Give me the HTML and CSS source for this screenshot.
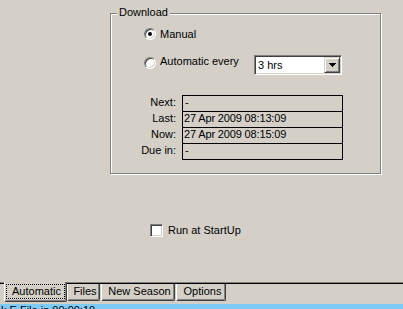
FILE: index.html
```html
<!DOCTYPE html>
<html lang="en">
  <head>
    <meta charset="UTF-8" />
    <title>Download</title>
    <link rel="stylesheet" href="styles.css">
  </head>
  <body>
    <div class="panel">
      <div class="group">
        <span class="legend">Download</span>

        <div class="opt opt-manual">
          <span class="radio checked"></span>
          <span class="opt-label">Manual</span>
        </div>

        <div class="opt opt-auto">
          <span class="radio"></span>
          <span class="opt-label auto-label">Automatic every</span>
          <div class="combo">
            <span class="combo-text">3 hrs</span>
            <span class="combo-btn">
              <svg width="7" height="4" viewBox="0 0 7 4"><path d="M0 0h7v1H0zM1 1h5v1H1zM2 2h3v1H2zM3 3h1v1H3z" fill="#000"/></svg>
            </span>
          </div>
        </div>

        <div class="times">
          <span class="t-label first">Next:</span>
          <span class="t-val first">-</span>
          <span class="t-label">Last:</span>
          <span class="t-val date">27 Apr 2009 08:13:09</span>
          <span class="t-label">Now:</span>
          <span class="t-val date">27 Apr 2009 08:15:09</span>
          <span class="t-label">Due in:</span>
          <span class="t-val">-</span>
        </div>
      </div>

      <div class="check-row">
        <span class="check"></span>
        <span>Run at StartUp</span>
      </div>
    </div>

    <div class="tabbar">
      <div class="tab selected"><span class="focus">Automatic</span></div>
      <div class="tab tab-files">Files</div>
      <div class="tab tab-season">New Season</div>
      <div class="tab tab-options">Options</div>
    </div>

    <div class="status">k E File in 00:00:10</div>
  </body>
</html>
```

FILE: styles.css
```css
* {
  box-sizing: border-box;
}

html,
body {
  margin: 0;
  padding: 0;
  width: 403px;
  height: 309px;
  overflow: hidden;
  background: #d4d0c8;
  color: #000;
  font-family: "Liberation Sans", Arial, sans-serif;
  font-size: 11px;
  line-height: 13px;
}

.panel {
  height: 283px;
  padding: 13px 0 0 110px;
  border-bottom: 1px solid #808080;
}

/* group box with etched edge */
.group {
  position: relative;
  width: 271px;
  height: 161px;
  border: 1px solid #808080;
  box-shadow: inset 1px 1px #fff, 1px 1px #fff;
  padding-top: 14px;
}

.legend {
  position: absolute;
  top: -8px;
  left: 6px;
  padding: 0 2px;
  background: #d4d0c8;
}

.opt {
  display: flex;
  align-items: flex-start;
  gap: 4px;
  margin-left: 33px;
}

.opt-auto {
  margin-top: 14px;
}

.opt-auto .radio {
  margin-top: 2px;
}

.auto-label {
  flex: 0 0 90px;
}

.radio {
  position: relative;
  flex: 0 0 12px;
  width: 12px;
  height: 12px;
  border-radius: 50%;
  background: #fff;
  border: 1px solid;
  border-color: #808080 #fff #fff #808080;
  box-shadow: inset 1px 1px #404040, inset -1px -1px #d4d0c8;
}

.radio.checked::after {
  content: "";
  position: absolute;
  top: 3px;
  left: 3px;
  width: 4px;
  height: 4px;
  border-radius: 50%;
  background: #000;
}

.combo {
  display: flex;
  align-items: center;
  width: 88px;
  height: 20px;
  background: #fff;
  border: 1px solid;
  border-color: #808080 #fff #fff #808080;
  box-shadow: inset 1px 1px #404040, inset -1px -1px #d4d0c8;
  padding-left: 3px;
}

.combo-text {
  flex: 1;
}

.combo-btn {
  display: flex;
  align-items: center;
  justify-content: center;
  width: 16px;
  height: 16px;
  margin-right: 1px;
  background: #d4d0c8;
  border: 1px solid;
  border-color: #d4d0c8 #404040 #404040 #d4d0c8;
  box-shadow: inset 1px 1px #fff, inset -1px -1px #808080;
}

.times {
  display: grid;
  grid-template-columns: 65px 161px;
  column-gap: 6px;
  margin-top: 20px;
}

.t-label {
  text-align: right;
}

.t-label.first {
  margin-top: 1px;
}

.t-val {
  height: 16px;
  border: 1px solid #000;
  border-top: none;
  padding-left: 2px;
}

.t-val.first {
  height: 17px;
  border-top: 1px solid #000;
}

.t-val.date {
  padding-left: 1px;
  letter-spacing: -0.15px;
}

.check-row {
  display: flex;
  align-items: flex-start;
  gap: 5px;
  margin: 50px 0 0 40px;
}

.check {
  width: 13px;
  height: 13px;
  background: #fff;
  border: 1px solid;
  border-color: #808080 #fff #fff #808080;
  box-shadow: inset 1px 1px #404040, inset -1px -1px #d4d0c8;
}

/* tabs sit under the page */
.tabbar {
  display: flex;
  align-items: flex-start;
  height: 21px;
  padding-left: 4px;
  border-top: 1px solid #000;
}

.tab {
  height: 17px;
  padding: 1px 0 0 3px;
  text-align: center;
  background: #d4d0c8;
  border-left: 1px solid #fff;
  border-right: 1px solid #404040;
  border-bottom: 1px solid #404040;
  box-shadow: inset -1px -1px #808080;
  border-radius: 0 0 2px 2px;
}

.tab.selected {
  position: relative;
  width: 63px;
  height: 20px;
  margin-top: -2px;
  padding: 2px 1px 0 1px;
  text-align: left;
}

.focus {
  display: block;
  width: 59px;
  height: 15px;
  border: 1px dotted #000;
  padding-left: 5px;
}

.tab-files {
  width: 33px;
}

.tab-season {
  width: 74px;
  margin-left: 1px;
}

.tab-options {
  width: 50px;
  margin-left: 1px;
}

.status {
  height: 5px;
  overflow: hidden;
  padding-left: 1px;
  background: #7ecbf5;
  white-space: nowrap;
}
```
